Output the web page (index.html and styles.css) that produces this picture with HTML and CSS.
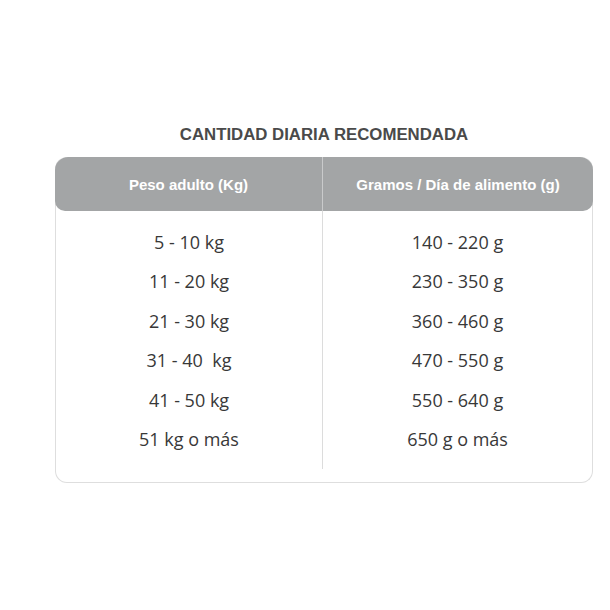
FILE: index.html
```html
<!DOCTYPE html>
<html lang="es">
<head>
<meta charset="utf-8">
<title>Cantidad diaria recomendada</title>
<link rel="stylesheet" href="styles.css">
</head>
<body>
<main class="wrap">
  <h1 class="title">CANTIDAD DIARIA RECOMENDADA</h1>
  <section class="card">
    <div class="head">
      <div class="hcell">Peso adulto (Kg)</div>
      <div class="hcell hcell-right">Gramos / Día de alimento (g)</div>
    </div>
    <div class="body">
      <div class="col">
        <div class="cell">5 - 10 kg</div>
        <div class="cell">11 - 20 kg</div>
        <div class="cell">21 - 30 kg</div>
        <div class="cell">31 - 40&nbsp; kg</div>
        <div class="cell">41 - 50 kg</div>
        <div class="cell">51 kg o más</div>
      </div>
      <div class="col col-right">
        <div class="cell">140 - 220 g</div>
        <div class="cell">230 - 350 g</div>
        <div class="cell">360 - 460 g</div>
        <div class="cell">470 - 550 g</div>
        <div class="cell">550 - 640 g</div>
        <div class="cell">650 g o más</div>
      </div>
    </div>
  </section>
</main>
</body>
</html>
```
FILE: styles.css
```css
html, body {
  margin: 0;
  padding: 0;
  background: #ffffff;
}

.wrap {
  width: 538px;
  margin: 0 0 0 55px;
  padding-top: 125px;
}

.title {
  margin: 0 0 12px 0;
  font-family: "Liberation Sans", Arial, sans-serif;
  font-weight: bold;
  font-size: 16.8px;
  line-height: 20px;
  color: #4a4a4a;
  text-align: center;
}

.card {
  box-sizing: border-box;
  width: 538px;
  border: 1px solid #dedede;
  border-top: none;
  border-radius: 12px;
  padding-bottom: 13px;
}

.head {
  display: grid;
  grid-template-columns: 267px 1fr;
  margin: 0 -1px;
  height: 54px;
  background: #a3a5a6;
  border-radius: 13px 13px 10px 10px;
  overflow: hidden;
}

.hcell {
  display: flex;
  align-items: center;
  justify-content: center;
  font-family: "Liberation Sans", Arial, sans-serif;
  font-weight: bold;
  font-size: 15px;
  color: #ffffff;
}

.hcell-right {
  border-left: 1px solid #c9cacb;
}

.body {
  display: grid;
  grid-template-columns: 266px 1fr;
}

.col {
  display: flex;
  flex-direction: column;
  padding: 11px 0 10px 0;
}

.col-right {
  border-left: 1px solid #dcdcdc;
}

.cell {
  height: 39.5px;
  display: flex;
  align-items: center;
  justify-content: center;
  font-family: "Open Sans", "Noto Sans", sans-serif;
  font-size: 18px;
  color: #383838;
}
```
